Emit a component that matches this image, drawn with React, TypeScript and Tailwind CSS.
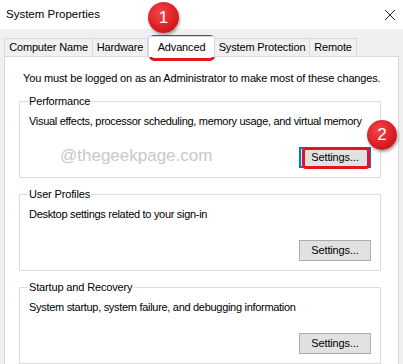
import React from "react";

function Btn({ focused }: { focused?: boolean }) {
  return (
    <div
      className={
        "w-[72px] h-[21px] flex items-center justify-center bg-[#e1e1e1] whitespace-nowrap " +
        (focused ? "border-2 border-[#0078d7]" : "border border-[#adadad]")
      }
    >
      Settings...
    </div>
  );
}

function Group({
  title,
  desc,
  focused,
}: {
  title: string;
  desc: string;
  focused?: boolean;
}) {
  return (
    <fieldset className="border border-[#dcdcdc] mr-[17px] h-[84px] pl-[9px] pr-[9px]">
      <legend className="px-[1px] ml-[-1px] leading-[14px] whitespace-nowrap">{title}</legend>
      <div className="leading-[14px] mt-[6px] whitespace-nowrap tracking-[-0.3px]">{desc}</div>
      <div className="flex justify-end mt-[19px]">
        <Btn focused={focused} />
      </div>
    </fieldset>
  );
}

function Circle({ n, className }: { n: string; className: string }) {
  return (
    <div
      className={
        "absolute rounded-full flex items-center justify-center text-white text-[17px] tracking-normal shadow-[1px_2px_3px_rgba(0,0,0,0.35)] bg-[radial-gradient(circle_at_40%_35%,#f0474b_0%,#d91c22_60%,#b5121a_100%)] " +
        className
      }
    >
      {n}
    </div>
  );
}

export default function App() {
  return (
    <div
      className="relative w-[403px] h-[364px] overflow-hidden bg-[#f0f0f0] text-black text-[11px] tracking-[-0.15px]"
      style={{ fontFamily: '"Liberation Sans", Arial, sans-serif' }}
    >
      <div className="h-[29px] bg-white flex items-center justify-between pl-[6px] pr-[7px]">
        <span className="text-[11.5px] tracking-normal">System Properties</span>
        <svg width="12" height="12" viewBox="0 0 12 12">
          <path d="M1 1L11 11M11 1L1 11" stroke="#222" strokeWidth="1" />
        </svg>
      </div>
      <div className="px-[4px] pt-[7px]">
        <div className="flex items-end h-[20px] whitespace-nowrap">
          <div className="w-[89px] h-[18px] border border-b-0 border-[#d9d9d9] flex items-center justify-center">
            Computer Name
          </div>
          <div className="w-[55px] h-[18px] border border-b-0 border-l-0 border-[#d9d9d9] flex items-center justify-center">
            Hardware
          </div>
          <div className="w-[67px] h-[21px] mb-[-1px] bg-white border border-b-0 border-[#d9d9d9] flex items-start justify-center pt-[2px] relative z-10">
            Advanced
          </div>
          <div className="w-[95px] h-[18px] border border-b-0 border-l-0 border-[#d9d9d9] flex items-center justify-center">
            System Protection
          </div>
          <div className="w-[47px] h-[18px] border border-b-0 border-l-0 border-[#d9d9d9] flex items-center justify-center">
            Remote
          </div>
        </div>
        <div className="w-[395px] h-[320px] bg-white border border-[#d9d9d9] pl-[14px] pt-[14px]">
          <div className="leading-[14px] pl-[4px] whitespace-nowrap">
            You must be logged on as an Administrator to make most of these changes.
          </div>
          <div className="mt-[9px] flex flex-col gap-[9px]">
            <Group
              title="Performance"
              desc="Visual effects, processor scheduling, memory usage, and virtual memory"
              focused
            />
            <Group title="User Profiles" desc="Desktop settings related to your sign-in" />
            <Group
              title="Startup and Recovery"
              desc="System startup, system failure, and debugging information"
            />
          </div>
        </div>
      </div>

      <div className="absolute left-[60px] top-[145px] text-[17px] leading-[22px] tracking-normal text-[#c8c8c8]">
        @thegeekpage.com
      </div>
      <div className="absolute left-[149px] top-[35px] w-[66px] h-[26px] border-[3px] border-[#e8141c] rounded-[5px]" />
      <div className="absolute left-[302px] top-[147px] w-[68px] h-[22px] border-[3px] border-[#e8141c] rounded-[4px]" />
      <Circle n="1" className="left-[148px] top-[2px] w-[31px] h-[31px]" />
      <Circle n="2" className="left-[367px] top-[120px] w-[30px] h-[30px]" />
    </div>
  );
}
